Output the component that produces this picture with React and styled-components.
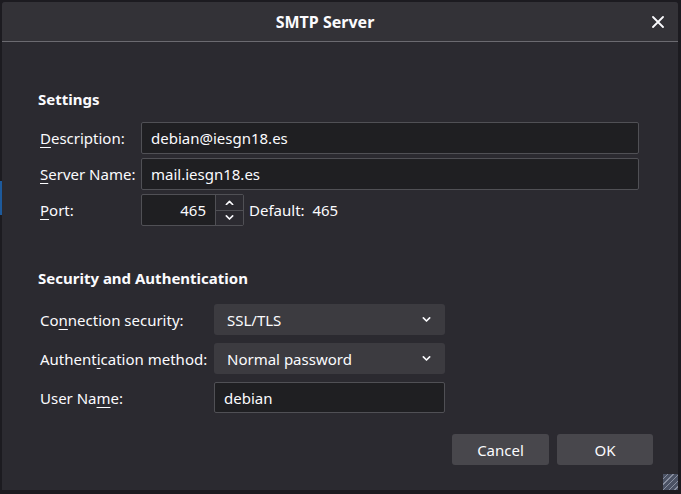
import React from 'react';
import styled, { createGlobalStyle } from 'styled-components';

const GlobalStyle = createGlobalStyle`
  html, body {
    margin: 0;
    padding: 0;
    background: #1c1b20;
    font-family: 'Noto Sans', 'Open Sans', sans-serif;
    color: #fbfbfe;
  }
`;

const Desktop = styled.div`
  position: relative;
  width: 681px;
  height: 494px;
  overflow: hidden;
  padding: 2px 3px 4px 2px;
  box-sizing: border-box;
`;

const BehindStrip = styled.div`
  position: absolute;
  left: 0;
  top: 181px;
  width: 2px;
  height: 34px;
  background: #1d5a9c;
`;

const Window = styled.div`
  position: relative;
  display: flex;
  flex-direction: column;
  height: 100%;
  background: #2b2a30;
  border-radius: 3px 3px 0 0;
  overflow: hidden;
`;

const TitleBar = styled.div`
  position: relative;
  display: flex;
  align-items: center;
  justify-content: center;
  height: 40px;
  padding-right: 30px;
  padding-top: 1px;
  box-sizing: border-box;
  background: #333237;
  border-bottom: 1px solid #6b6a70;
  font-size: 16px;
  font-weight: 700;
`;

const CloseButton = styled.div`
  position: absolute;
  right: 13px;
  top: 13px;
  width: 14px;
  height: 14px;
  display: flex;
  align-items: center;
  justify-content: center;
`;

const Body = styled.div`
  flex: 1;
  display: flex;
  flex-direction: column;
  padding: 46px 39px 0 36px;
`;

const Heading = styled.div`
  font-size: 15px;
  font-weight: 700;
  line-height: 22px;
  margin-top: ${p => p.$top || 0}px;
  margin-bottom: ${p => p.$gap}px;
`;

const Form = styled.div`
  display: grid;
  grid-template-columns: ${p => p.$label}px ${p => p.$field};
  row-gap: ${p => p.$rowGap}px;
  align-items: center;
  font-size: 15px;
`;

const Label = styled.div`
  padding-left: 2px;
  line-height: 20px;
  white-space: nowrap;
`;

const Key = styled.span`
  text-decoration: underline;
  text-underline-offset: 3px;
  text-decoration-thickness: 1px;
`;

const TextInput = styled.div`
  height: ${p => p.$height || 32}px;
  box-sizing: border-box;
  background: #1f1f22;
  border: 1px solid #505055;
  border-radius: 2px;
  display: flex;
  align-items: center;
  padding: 0 9px;
`;

const PortRow = styled.div`
  display: flex;
  align-items: center;
  gap: 5px;
`;

const PortBox = styled.div`
  width: 103px;
  height: 32px;
  box-sizing: border-box;
  background: #1f1f22;
  border: 1px solid #505055;
  border-radius: 2px;
  display: flex;
  align-items: stretch;
`;

const PortValue = styled.div`
  flex: 1;
  display: flex;
  align-items: center;
  justify-content: flex-end;
  padding-right: 9px;
`;

const Spinner = styled.div`
  width: 27px;
  display: flex;
  flex-direction: column;
  border-left: 1px solid #505055;
  background: #2b2a30;
`;

const SpinButton = styled.div`
  flex: 1;
  display: flex;
  align-items: center;
  justify-content: center;
  border-top: ${p => (p.$lower ? '1px solid #505055' : 'none')};
`;

const DefaultText = styled.span`
  word-spacing: 4px;
`;

const Select = styled.div`
  height: 31px;
  box-sizing: border-box;
  background: #3c3b40;
  border-radius: 3px;
  display: flex;
  align-items: center;
  justify-content: space-between;
  padding: 0 14px 0 13px;
`;

const Footer = styled.div`
  display: flex;
  justify-content: flex-end;
  gap: 8px;
  margin-top: 21px;
  margin-right: -14px;
`;

const Button = styled.div`
  width: ${p => p.$width}px;
  height: 31px;
  border-radius: 3px;
  background: #48474c;
  display: flex;
  align-items: center;
  justify-content: center;
  font-size: 15px;
`;

const Grip = styled.div`
  position: absolute;
  right: 0;
  bottom: 0;
  width: 15px;
  height: 16px;
  background: repeating-linear-gradient(
    135deg,
    #4b5264 0px,
    #4b5264 3px,
    #8a90a0 3px,
    #8a90a0 4px
  );
`;

const Chevron = ({ up, size = 10 }) => (
  <svg width={size} height={size * 0.6} viewBox="0 0 10 6">
    <path
      d={up ? 'M1.5 5 L5 1.5 L8.5 5' : 'M1.5 1 L5 4.5 L8.5 1'}
      fill="none"
      stroke="#fbfbfe"
      strokeWidth="1.8"
      strokeLinecap="round"
      strokeLinejoin="round"
    />
  </svg>
);

export default function App() {
  return (
    <>
      <GlobalStyle />
      <Desktop>
        <BehindStrip />
        <Window>
          <TitleBar>
            SMTP Server
            <CloseButton>
              <svg width="12" height="12" viewBox="0 0 12 12">
                <path d="M1 1 L11 11 M11 1 L1 11" stroke="#fbfbfe" strokeWidth="1.8" strokeLinecap="round" />
              </svg>
            </CloseButton>
          </TitleBar>
          <Body>
            <Heading $gap={12}>Settings</Heading>
            <Form $label={103} $field="1fr" $rowGap={4}>
              <Label><Key>D</Key>escription:</Label>
              <TextInput>debian@iesgn18.es</TextInput>
              <Label><Key>S</Key>erver Name:</Label>
              <TextInput>mail.iesgn18.es</TextInput>
              <Label><Key>P</Key>ort:</Label>
              <PortRow>
                <PortBox>
                  <PortValue>465</PortValue>
                  <Spinner>
                    <SpinButton><Chevron up size={9} /></SpinButton>
                    <SpinButton $lower><Chevron size={9} /></SpinButton>
                  </Spinner>
                </PortBox>
                <DefaultText>Default: 465</DefaultText>
              </PortRow>
            </Form>
            <Heading $top={41} $gap={15}>Security and Authentication</Heading>
            <Form $label={176} $field="231px" $rowGap={8}>
              <Label>Co<Key>n</Key>nection security:</Label>
              <Select>SSL/TLS<Chevron size={9} /></Select>
              <Label>Authent<Key>i</Key>cation method:</Label>
              <Select>Normal password<Chevron size={9} /></Select>
              <Label>User Na<Key>m</Key>e:</Label>
              <TextInput $height={31}>debian</TextInput>
            </Form>
            <Footer>
              <Button $width={97}>Cancel</Button>
              <Button $width={96}>OK</Button>
            </Footer>
          </Body>
          <Grip />
        </Window>
      </Desktop>
    </>
  );
}
